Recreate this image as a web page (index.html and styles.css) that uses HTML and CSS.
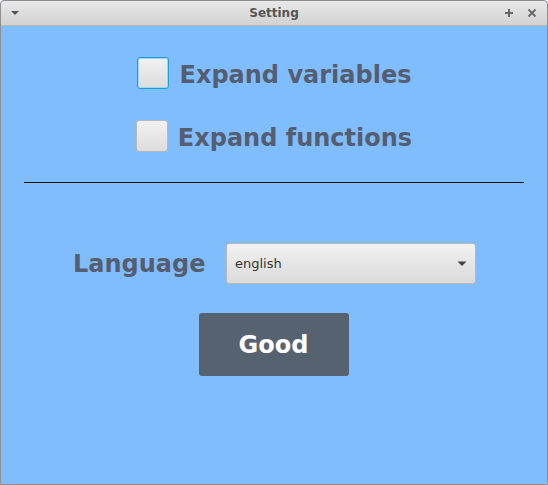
FILE: index.html
```html
<!DOCTYPE html>
<html>
<head>
<meta charset="utf-8">
<link rel="stylesheet" href="styles.css">
</head>
<body>
<div class="window">
  <div class="titlebar">
    <span class="tb-menu"><svg width="10" height="6" viewBox="0 0 10 6"><path d="M1 1 L9 1 L5 5 Z" fill="#555"/></svg></span>
    <span class="title">Setting</span>
    <span class="tb-btns">
      <svg width="10" height="10" viewBox="0 0 10 10"><path d="M5 1 V9 M1 5 H9" stroke="#666" stroke-width="2"/></svg>
      <svg width="10" height="10" viewBox="0 0 10 10"><path d="M1.5 1.5 L8.5 8.5 M8.5 1.5 L1.5 8.5" stroke="#666" stroke-width="1.8"/></svg>
    </span>
  </div>
  <div class="content">
    <div class="checks">
      <label class="check"><span class="box focused"></span><span class="clabel">Expand variables</span></label>
      <label class="check second"><span class="box"></span><span class="clabel">Expand functions</span></label>
    </div>
    <div class="sep"></div>
    <div class="lang-row">
      <span class="lang-label">Language</span>
      <div class="combo"><span>english</span><svg width="10" height="6" viewBox="0 0 10 6"><path d="M0.5 0.5 L9.5 0.5 L5 5 Z" fill="#444"/></svg></div>
    </div>
    <div class="btn-row"><button class="good">Good</button></div>
  </div>
</div>
</body>
</html>
```

FILE: styles.css
```css
html, body {
  margin: 0;
  padding: 0;
  width: 548px;
  height: 485px;
  overflow: hidden;
  font-family: "DejaVu Sans", sans-serif;
}
.window {
  box-sizing: border-box;
  width: 548px;
  height: 485px;
  border: 1px solid #8f8f8f;
  border-radius: 4px 4px 0 0;
  background: #80bdfd;
  display: flex;
  flex-direction: column;
}
.titlebar {
  height: 24px;
  flex: none;
  background: linear-gradient(#e8e8e8, #d2d2d2);
  border-bottom: 1px solid #b5b5b5;
  display: flex;
  align-items: center;
  position: relative;
  border-radius: 4px 4px 0 0;
}
.tb-menu {
  position: absolute;
  left: 9px;
  top: 9px;
  display: flex;
}
.title {
  flex: 1;
  text-align: center;
  font-weight: bold;
  font-size: 12px;
  color: #555;
}
.tb-btns {
  position: absolute;
  right: 10px;
  top: 7px;
  display: flex;
  gap: 13px;
}
.content {
  flex: 1;
  display: flex;
  flex-direction: column;
}
.checks {
  display: flex;
  flex-direction: column;
  align-items: center;
  padding-top: 30px;
}
.check {
  display: flex;
  align-items: center;
  gap: 11px;
  height: 34px;
}
.check.second {
  margin-top: 29px;
  gap: 10px;
}
.box {
  box-sizing: border-box;
  width: 32px;
  height: 32px;
  border: 1px solid #b8b8b8;
  border-radius: 3px;
  background: linear-gradient(#f2f2f2, #dcdcdc);
}
.box.focused {
  border: 1px solid #1a9fd9;
  box-shadow: inset 0 0 0 1px #9fd6ef;
}
.clabel {
  font-weight: bold;
  font-size: 24px;
  color: #555e70;
  padding-top: 4px;
}
.sep {
  margin: 29px 23px 0 23px;
  height: 1px;
  background: #111;
}
.lang-row {
  display: flex;
  align-items: center;
  margin-top: 60px;
  padding-left: 72px;
}
.lang-label {
  font-weight: bold;
  font-size: 24px;
  color: #555e70;
  width: 153px;
}
.combo {
  box-sizing: border-box;
  width: 250px;
  height: 41px;
  border: 1px solid #b8b8b8;
  border-radius: 3px;
  background: linear-gradient(#f2f2f2, #dadada);
  display: flex;
  align-items: center;
  justify-content: space-between;
  padding: 0 8px 0 8px;
  font-size: 13px;
  color: #333;
}
.btn-row {
  display: flex;
  justify-content: center;
  margin-top: 29px;
  padding-right: 1px;
}
.good {
  width: 150px;
  height: 63px;
  border: none;
  border-radius: 3px;
  background: #566270;
  color: #fff;
  font-family: "DejaVu Sans", sans-serif;
  font-weight: bold;
  font-size: 24px;
}
```
